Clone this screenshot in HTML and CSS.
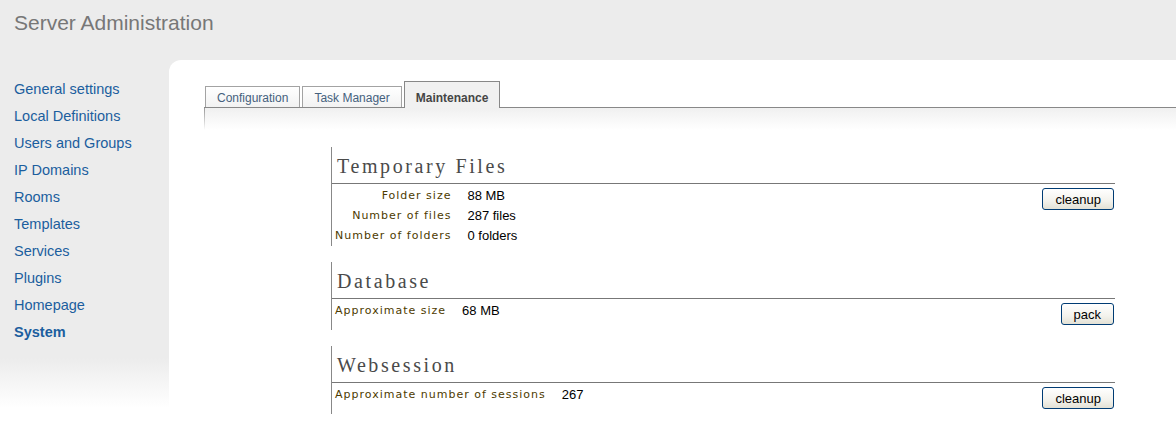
FILE: index.html
```html
<!DOCTYPE html>
<html lang="en">
<head>
  <meta charset="UTF-8">
  <title>Server Administration</title>
  <link rel="stylesheet" href="styles.css">
</head>
<body>
  <div class="header">Server Administration</div>

  <div class="main">
    <ul class="sidebar">
      <li><a href="#">General settings</a></li>
      <li><a href="#">Local Definitions</a></li>
      <li><a href="#">Users and Groups</a></li>
      <li><a href="#">IP Domains</a></li>
      <li><a href="#">Rooms</a></li>
      <li><a href="#">Templates</a></li>
      <li><a href="#">Services</a></li>
      <li><a href="#">Plugins</a></li>
      <li><a href="#">Homepage</a></li>
      <li><a href="#" class="current">System</a></li>
    </ul>

    <div class="panel">
      <div class="tabs">
        <a href="#" class="tab">Configuration</a>
        <a href="#" class="tab">Task Manager</a>
        <a href="#" class="tab active">Maintenance</a>
      </div>

      <div class="tab-body">
        <div class="section">
          <h2>Temporary Files</h2>
          <div class="section-body">
            <table class="info">
              <tr><td class="label">Folder size</td><td class="value">88 MB</td></tr>
              <tr><td class="label">Number of files</td><td class="value">287 files</td></tr>
              <tr><td class="label">Number of folders</td><td class="value">0 folders</td></tr>
            </table>
            <button>cleanup</button>
          </div>
        </div>

        <div class="section">
          <h2>Database</h2>
          <div class="section-body">
            <table class="info">
              <tr><td class="label">Approximate size</td><td class="value">68 MB</td></tr>
            </table>
            <button>pack</button>
          </div>
        </div>

        <div class="section">
          <h2>Websession</h2>
          <div class="section-body">
            <table class="info">
              <tr><td class="label">Approximate number of sessions</td><td class="value">267</td></tr>
            </table>
            <button>cleanup</button>
          </div>
        </div>
      </div>
    </div>
  </div>
</body>
</html>
```

FILE: styles.css
```css
* { box-sizing: border-box; }
body {
  margin: 0;
  padding: 0;
  background: #ececec;
  font-family: "Liberation Sans", Arial, sans-serif;
}

.header {
  height: 60px;
  padding: 11px 14px 0;
  font-size: 21px;
  line-height: 24px;
  color: #777;
}

.main {
  display: flex;
  height: calc(100vh - 60px);
}

.sidebar {
  width: 169px;
  flex-shrink: 0;
  margin: 0;
  padding: 16px 0 0 14px;
  list-style: none;
  background: linear-gradient(to bottom, #ececec 298px, #fff 348px);
}

.sidebar li {
  line-height: 27px;
  font-size: 14.5px;
}

.sidebar a {
  color: #1b5e9e;
  text-decoration: none;
}

.sidebar a.current {
  font-weight: bold;
}

.panel {
  flex: 1;
  background: #fff;
  border-top-left-radius: 12px;
  padding: 21px 0 0 35px;
}

.tabs {
  display: flex;
  align-items: flex-end;
  gap: 2px;
  margin-left: 1px;
}

.tab {
  display: block;
  height: 21px;
  padding: 1px 11px 0;
  border: 1px solid #a3a3a3;
  border-bottom: none;
  background: linear-gradient(to bottom, #fff, #f2f2f2);
  font-size: 12px;
  line-height: 20px;
  color: #45617d;
  text-decoration: none;
}

.tab.active {
  position: relative;
  height: 27px;
  margin-bottom: -1px;
  padding-top: 6px;
  border-color: #888;
  background: #f1f1f1;
  font-weight: bold;
  color: #454545;
}

.tab-body {
  border-top: 1px solid #888;
  padding: 39px 0 30px 127px;
  background:
    linear-gradient(to bottom, #999, rgba(153,153,153,0) 22px) left top / 1px 22px no-repeat,
    linear-gradient(to bottom, #f0f0f0, #fff 22px);
}

.section {
  width: 784px;
  border-left: 1px solid #888;
  margin-bottom: 16px;
}

.section h2 {
  margin: 0;
  padding: 7px 0 5px 5px;
  border-bottom: 1px solid #777;
  font-family: "Liberation Serif", "Times New Roman", serif;
  font-size: 20px;
  font-weight: normal;
  line-height: 24px;
  letter-spacing: 2.6px;
  color: #4a4a4a;
}

.section-body {
  display: flex;
  justify-content: space-between;
  align-items: flex-start;
  padding-right: 1px;
}

.info {
  border-collapse: collapse;
  margin-top: 2px;
}

.info td {
  padding: 0;
  height: 20px;
  line-height: 20px;
}

.info .label {
  padding: 0 16px 0 3px;
  text-align: right;
  font-family: "DejaVu Sans", Verdana, sans-serif;
  font-size: 11px;
  letter-spacing: 1px;
  color: #4d3b00;
  white-space: nowrap;
}

.info .value {
  font-size: 13px;
  color: #000;
}

.section-body button {
  height: 22px;
  margin: 4px 0 5px;
  padding: 0 12px;
  border: 1px solid #003c74;
  border-radius: 3px;
  background: linear-gradient(to bottom, #fff, #f3f2ec 60%, #e3e1d5);
  font-family: "Liberation Sans", Arial, sans-serif;
  font-size: 13px;
  color: #000;
  cursor: pointer;
}
```
